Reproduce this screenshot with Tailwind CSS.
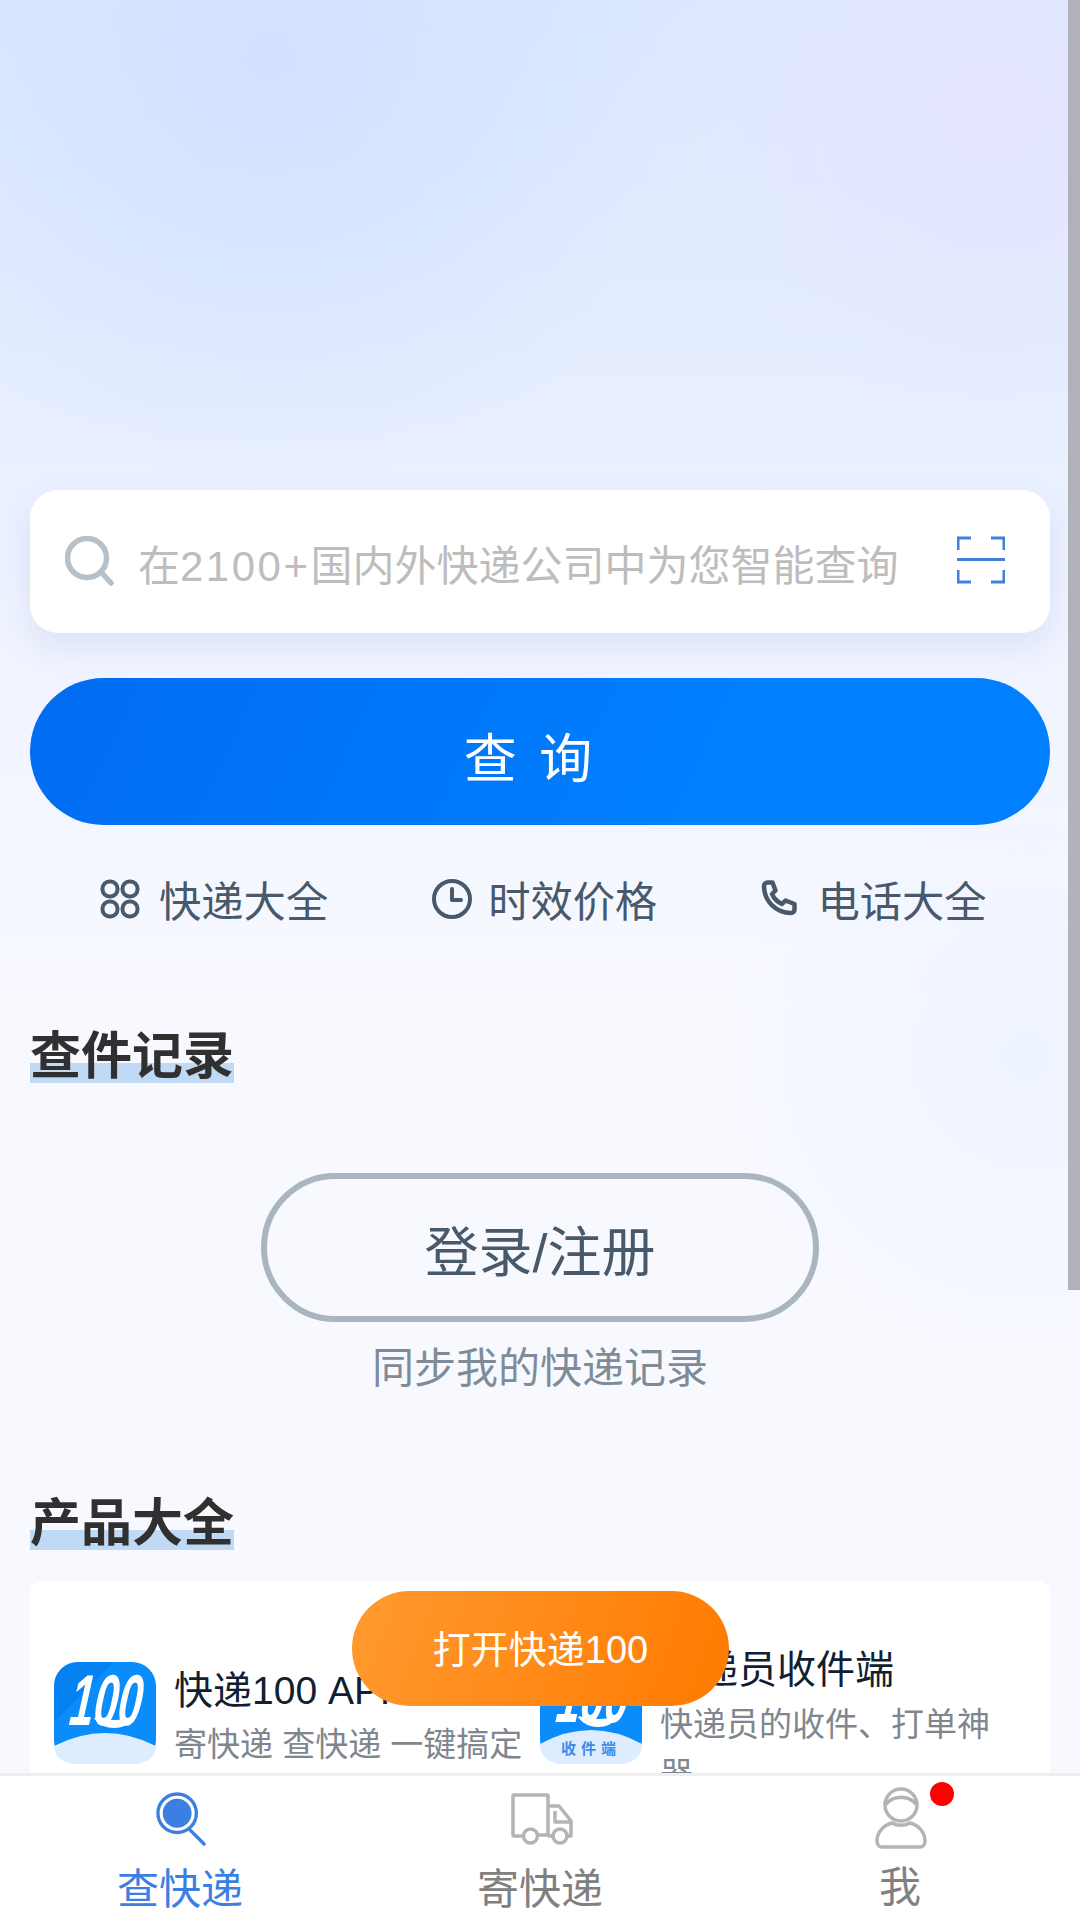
<!DOCTYPE html>
<html lang="zh-CN">
<head>
    <meta charset="UTF-8">
    <title>快递100</title>
    <meta name="viewport" content="width=device-width, initial-scale=1.0">
    <script src="https://cdn.jsdelivr.net/npm/@tailwindcss/browser@4"></script>
</head>
<body class="font-['Liberation_Sans','Noto_Sans_CJK_SC',sans-serif]">
<div class="relative w-[1080px] h-[1920px] overflow-hidden bg-[#f8f9ff] bg-[radial-gradient(circle_at_25%_3%,#d3e1ff_0,transparent_430px),radial-gradient(circle_at_92%_6%,#e4e5ff_0,transparent_300px),radial-gradient(circle_at_95%_55%,#eef4ff_0,transparent_300px),linear-gradient(180deg,#dde8ff_0,#e6eeff_400px,#f0f4ff_650px,#f8f9ff_1000px)]">

    <main class="px-[30px] pt-[490px]">
        <!-- search -->
        <div class="flex items-center h-[143px] bg-white rounded-[28px] shadow-[0_14px_34px_rgba(90,110,170,0.13)]">
            <svg class="ml-[35px] w-[50px] h-[50px] shrink-0 -mt-[1px]" viewBox="0 0 50 50" fill="none" stroke="#b5c0c8" stroke-width="5.500" stroke-linecap="round">
                <circle cx="22" cy="22" r="19.500"/>
                <path d="M37 37l9 10"/>
            </svg>
            <span class="ml-[23px] pt-[10px] text-[42px] leading-[60px] text-[#bdbdbd] whitespace-nowrap">在<span class="tracking-[2.500px]">2100+</span>国内外快递公司中为您智能查询</span>
            <svg class="ml-auto mr-[45px] w-[48px] h-[48px] shrink-0 -mt-[3px]" viewBox="0 0 48 48" fill="none" stroke="#3f80dc" stroke-width="3">
                <path d="M1 14V2h13M34 2h13v12M1 34v12h13M34 46h13V34"/>
                <path d="M0 23.500h48"/>
            </svg>
        </div>

        <!-- query button -->
        <button class="block w-full h-[147px] mt-[45px] pt-[17px] pr-[20px] rounded-full bg-[linear-gradient(115deg,#006cf2,#0080ff_70%)] text-white text-[53px] leading-[60px] tracking-[4px]">查 询</button>

        <!-- quick links -->
        <div class="flex items-center gap-[104px] h-[60px] mt-[44px] ml-[70px] text-[42.300px] leading-[60px] text-[#47596a] whitespace-nowrap">
            <div class="flex items-center">
                <svg class="w-[40px] h-[40px] mr-[19px]" viewBox="0 0 40 40" fill="none" stroke="#47596a" stroke-width="4">
                    <rect x="2.500" y="2.500" width="15" height="15" rx="7"/><rect x="22.500" y="2.500" width="15" height="15" rx="7"/>
                    <rect x="2.500" y="22.500" width="15" height="15" rx="7"/><rect x="22.500" y="22.500" width="15" height="15" rx="7"/>
                </svg>
                <span class="h-[60px] pt-[4px]">快递大全</span>
            </div>
            <div class="flex items-center">
                <svg class="w-[40px] h-[40px] mr-[16px]" viewBox="0 0 40 40" fill="none" stroke="#47596a" stroke-width="4" stroke-linecap="round" stroke-linejoin="round">
                    <circle cx="20" cy="20" r="18"/>
                    <path d="M20 10v11h9"/>
                </svg>
                <span class="h-[60px] pt-[4px]">时效价格</span>
            </div>
            <div class="flex items-center">
                <svg class="w-[38px] h-[38px] mr-[18px]" viewBox="0 0 38 38" fill="none" stroke="#47596a" stroke-width="4.500" stroke-linejoin="round">
                    <path d="M3 6c0-2 1.500-3.500 3.500-3.500h5l3 8-3.500 3.500c2 4.500 5.500 8 10 10l3.500-3.500 9 3.500v5.500c0 2-1.500 3.500-3.500 3.500C15 33 3 21 3 6z"/>
                </svg>
                <span class="h-[60px] pt-[4px]">电话大全</span>
            </div>
        </div>

        <!-- history -->
        <h2 class="w-fit h-[63px] mt-[91px] text-[51px] leading-[74px] font-bold text-[#303030] bg-[linear-gradient(transparent_43px,#c0daf5_43px)]">查件记录</h2>
        <button class="block w-[558px] h-[149px] mx-auto mt-[90px] pt-[10px] rounded-full border-[6px] border-[#a9b6bf] text-[54px] leading-[60px] text-[#47596a]">登录/注册</button>
        <p class="mt-[16px] text-center text-[42px] leading-[62px] text-[#7f8c98]">同步我的快递记录</p>

        <!-- products -->
        <h2 class="w-fit h-[63px] mt-[87px] text-[51px] leading-[74px] font-bold text-[#303030] bg-[linear-gradient(transparent_43px,#c0daf5_43px)]">产品大全</h2>
        <div class="grid grid-cols-2 h-[340px] mt-[31px] pt-[81px] bg-white rounded-[12px]">
            <div class="flex items-center h-[102px] pl-[24px]">
                <svg class="w-[102px] h-[102px] shrink-0 overflow-visible" viewBox="0 0 102 102">
                    <rect width="102" height="102" rx="24" fill="#0a8dfb"/>
                    <path d="M24 0h36L0 60V24A24 24 0 0 1 24 0z" fill="#0076e8" opacity=".5"/>
                    <path d="M0 84Q51 58 102 84C102 94 94 102 78 102H24C8 102 0 94 0 84z" fill="#ddecff"/>
                    <text x="51" y="63" transform="skewX(-6) translate(6 0)" text-anchor="middle" font-family="Liberation Sans" font-weight="700" font-style="italic" font-size="72" textLength="72" lengthAdjust="spacingAndGlyphs" fill="#fff">100</text>
                    <path d="M41 56c10 12 28 12 38 0-10 4-28 4-38 0z" fill="#fff" stroke="#fff" stroke-width="2"/>
                </svg>
                <div class="ml-[18px] mt-[6px] whitespace-nowrap">
                    <p class="text-[39px] leading-[58px] text-[#102030]">快递100 APP</p>
                    <p class="text-[33px] leading-[50px] text-[#80868e]">寄快递 查快递 一键搞定</p>
                </div>
            </div>
            <div class="flex items-center h-[102px]">
                <svg class="w-[102px] h-[102px] shrink-0 overflow-visible" viewBox="0 0 102 102">
                    <rect width="102" height="102" rx="24" fill="#0a8dfb"/>
                    <path d="M0 82Q51 54 102 82C102 94 94 102 78 102H24C8 102 0 94 0 82z" fill="#ddecff"/>
                    <text x="51" y="60" transform="skewX(-6) translate(6 0)" text-anchor="middle" font-family="Liberation Sans" font-weight="700" font-style="italic" font-size="72" textLength="72" lengthAdjust="spacingAndGlyphs" fill="#fff">100</text>
                    <path d="M39 55c10 12 28 12 38 0-10 4-28 4-38 0z" fill="#fff" stroke="#fff" stroke-width="2"/>
                    <text x="51" y="92" text-anchor="middle" font-size="15" font-weight="700" letter-spacing="5" fill="#3f8ae8">收件端</text>
                </svg>
                <div class="ml-[18px] mt-[13px] w-[350px]">
                    <p class="text-[39px] leading-[60px] text-[#102030]">快递员收件端</p>
                    <p class="text-[33px] leading-[50px] text-[#80868e]">快递员的收件、打单神器</p>
                </div>
            </div>
        </div>
    </main>

    <!-- floating open app -->
    <button class="absolute left-[352px] top-[1591px] w-[377px] h-[115px] pt-[3px] rounded-full bg-[linear-gradient(110deg,#ff9a30,#ff7a00)] text-white text-[38px]">打开快递100</button>

    <!-- tab bar -->
    <nav class="absolute left-0 bottom-0 grid grid-cols-3 w-full h-[147px] bg-white border-t-[3px] border-[#eeeeee] text-[42px] leading-[56px] text-[#808080] text-center">
        <div class="flex flex-col items-center text-[#3c7fe3]">
            <svg class="w-[50px] h-[54px] mt-[16px] ml-[2px]" viewBox="0 0 52 56" fill="none" stroke="#3c7fe3" stroke-width="3.500" stroke-linecap="round">
                <circle cx="22" cy="22" r="20"/>
                <circle cx="22" cy="22" r="15" fill="#3c7fe3" stroke="none"/>
                <path d="M34 38l16 16"/>
            </svg>
            <span class="mt-[16px]">查快递</span>
        </div>
        <div class="flex flex-col items-center">
            <svg class="w-[62px] h-[52px] mt-[17px] mb-[3px] ml-[4px]" viewBox="0 0 62 52" fill="none" stroke="#b4b4b4" stroke-width="3.500" stroke-linejoin="round">
                <path d="M13 43H3a1 1 0 0 1-1-1V3a1 1 0 0 1 1-1h33a1 1 0 0 1 1 1v39H26"/>
                <path d="M37 13h11l12 15v15h-5M43 43h-6"/>
                <path d="M44 18v11h16"/>
                <circle cx="19.500" cy="43" r="7"/>
                <circle cx="49" cy="43" r="7"/>
            </svg>
            <span class="mt-[14px]">寄快递</span>
        </div>
        <div class="relative flex flex-col items-center">
            <svg class="w-[52px] h-[62px] mt-[11px] ml-[2px]" viewBox="0 0 52 62" fill="none" stroke="#b4b4b4" stroke-width="3.500" stroke-linecap="round">
                <circle cx="26" cy="18" r="16"/>
                <path d="M11 17c8-9 22-9 30 0"/>
                <path d="M17 36C8 38 2 46 2 54c0 3 2 6 5 6h38c3 0 5-3 5-6 0-8-6-16-15-18-5 3-13 3-18 0z"/>
            </svg>
            <span class="mt-[11px]">我</span>
            <i class="absolute left-[210px] top-[6px] w-[24px] h-[24px] rounded-full bg-[#ff0000]"></i>
        </div>
    </nav>

    <!-- page scrollbar -->
    <div class="absolute right-0 top-0 w-[12px] h-[1290px] bg-[#b1b1b9]"></div>
</div>
</body>
</html>
